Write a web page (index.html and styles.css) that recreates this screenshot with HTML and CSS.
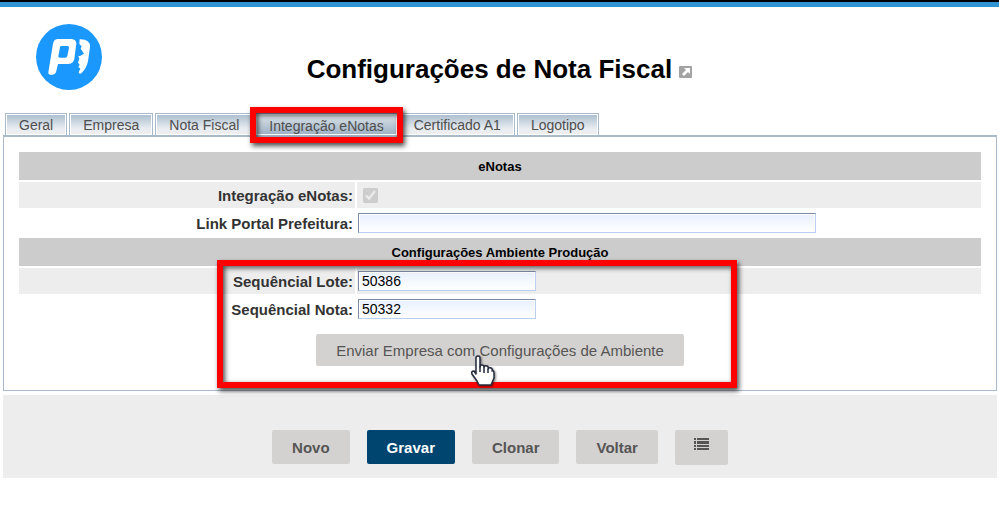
FILE: index.html
```html
<!DOCTYPE html>
<html lang="pt-BR">
<head>
  <meta charset="UTF-8" />
  <meta name="viewport" content="width=device-width, initial-scale=1.0"/>
  <title>Configurações de Nota Fiscal</title>
  <link rel="stylesheet" href="styles.css">
</head>
<body>
  <div class="topbar"></div>

  <header class="header">
    <svg class="logo" viewBox="0 0 198 198" aria-hidden="true">
      <circle cx="99" cy="99" r="99" fill="#1b98fd"/>
      <path fill="#fff" fill-rule="evenodd" d="M64 45H107Q120 46 121 58L115 105Q112 119 98 120H66L60 145Q57 152 50 152H41Q36 151 37 145L51 59Q54 46 64 45ZM75 66Q73 66 72 70L67 97Q67 101 71 101H88Q93 101 94 96L99 71Q99 66 95 66Z"/>
      <path fill="#fff" d="M131 46Q163 45 162 69L156 112Q152 132 137 147Q130 152 128 145L133 134L127 129L131 122L126 116L130 104L127 95Q133 98 136 94L144 89L134 74L137 67L130 60Z"/>
    </svg>
    <h1 class="title">Configurações de Nota Fiscal
      <svg class="title-icon" viewBox="0 0 13 12" aria-hidden="true">
        <rect width="13" height="12" rx="1" fill="#a3a3a3"/>
        <path d="M5 2h6v6L9 6 5 10 3 8l4-4z" fill="#fff"/>
      </svg>
    </h1>
  </header>

  <nav class="tabs">
    <a class="tab" href="#">Geral</a>
    <a class="tab" href="#">Empresa</a>
    <a class="tab" href="#">Nota Fiscal</a>
    <a class="tab active" href="#">Integração eNotas</a>
    <a class="tab" href="#">Certificado A1</a>
    <a class="tab" href="#">Logotipo</a>
  </nav>

  <form>
    <div class="panel">
      <table class="fields">
        <colgroup>
          <col class="col-name">
          <col>
        </colgroup>
        <tr class="group"><th colspan="2">eNotas</th></tr>
        <tr class="odd">
          <td class="name"><label for="integracao">Integração eNotas:</label></td>
          <td><input type="checkbox" id="integracao" class="check" checked disabled /></td>
        </tr>
        <tr>
          <td class="name"><label for="link">Link Portal Prefeitura:</label></td>
          <td><input type="text" id="link" class="field wide" /></td>
        </tr>
        <tr class="group"><th colspan="2">Configurações Ambiente Produção</th></tr>
        <tr class="odd">
          <td class="name"><label for="lote">Sequêncial Lote:</label></td>
          <td><input type="text" id="lote" class="field" value="50386" /></td>
        </tr>
        <tr>
          <td class="name"><label for="nota">Sequêncial Nota:</label></td>
          <td><input type="text" id="nota" class="field" value="50332" /></td>
        </tr>
      </table>

      <div class="send">
        <button type="button" class="btn btn-send">Enviar Empresa com Configurações de Ambiente</button>
      </div>

      <div class="ring">
        <svg class="hand" viewBox="0 0 26 34" aria-hidden="true">
          <path d="M6 4Q6 2 8 2T10 4V13Q10 11 12 11T14 13Q15 11 17 12T18 15Q19 13 21 14T22 17Q24 16 24 19V24L21 31H9L7 27L2 20Q1 17 4 17L6 20Z" fill="#fff" stroke="#252b3d" stroke-width="1.5" stroke-linejoin="round"/>
          <path d="M10 12V18M14 13V19M18 15V19" fill="none" stroke="#252b3d" stroke-width="1.5"/>
        </svg>
      </div>
    </div>

    <div class="actions">
      <button type="button" class="btn">Novo</button>
      <button type="button" class="btn btn-primary">Gravar</button>
      <button type="button" class="btn">Clonar</button>
      <button type="button" class="btn">Voltar</button>
      <button type="button" class="btn btn-list" aria-label="Listar">
        <svg class="list-icon" viewBox="0 0 15 13" aria-hidden="true">
          <path d="M0 0h2v2H0zM3 0h12v2H3zM0 3h2v3H0zM3 3h12v3H3zM0 7h2v2H0zM3 7h12v2H3zM0 10h2v2H0zM3 10h12v2H3z" fill="#555"/>
        </svg>
      </button>
    </div>
  </form>
</body>
</html>
```
FILE: styles.css
```css
body {
  margin: 0;
  background: #fff;
  font-family: "Liberation Sans", Arial, sans-serif;
}
.topbar {
  height: 5px;
  border-top: 2px solid #000;
  background: #2f94d1;
}
.header {
  display: grid;
  grid-template-columns: 66px 1fr 66px;
  padding: 17px 36px 23px;
}
.logo {
  width: 66px;
  height: 66px;
}
.title {
  margin: 0;
  padding-top: 28px;
  font-size: 26px;
  line-height: 34px;
  text-align: center;
  color: #000;
}
.title-icon {
  width: 13px;
  height: 12px;
}

/* tabs */
.tabs {
  display: flex;
  gap: 2px;
  padding: 0 5px;
}
.tab {
  position: relative;
  box-sizing: border-box;
  height: 22px;
  padding: 0 13px;
  border: 1px solid #a9bacb;
  border-bottom: none;
  box-shadow: inset 0 0 0 1px #fff;
  background: linear-gradient(#a9bccd, #e9edf1 70%, #eee);
  font-size: 14px;
  line-height: 23px;
  color: #4e4e4e;
  text-decoration: none;
}
.tab.active {
  background: linear-gradient(#dde4ea, #9db1c4);
  line-height: 25px;
}
.tab.active::after {
  content: "";
  position: absolute;
  z-index: 2;
  inset: -7px -6px -8px;
  border: 6px solid #f00;
  box-shadow: 2px 3px 5px rgba(0,0,0,0.7), inset 2px 2px 5px rgba(0,0,0,0.7);
}

/* form */
.panel {
  position: relative;
  margin: 0 2px 0 3px;
  padding: 13px 13px 24px;
  border: 1px solid #a9bacb;
  border-top-width: 2px;
}
.fields {
  width: 100%;
  border-spacing: 2px;
  table-layout: fixed;
}
.col-name {
  width: 35%;
}
.fields td, .fields th {
  height: 26px;
  padding: 0 1px;
}
.fields .group th {
  height: 28px;
  padding: 0;
  background: #ccc;
  font-size: 13px;
  color: #000;
}
.odd td {
  background: #ededed;
}
.fields .name {
  padding-right: 2px;
  text-align: right;
  font-size: 15px;
  font-weight: bold;
  color: #333;
}
.check {
  display: block;
  width: 15px;
  height: 15px;
  margin: 0 5px;
}
.field {
  display: block;
  box-sizing: border-box;
  width: 178px;
  height: 20px;
  padding: 0 3px;
  border: 1px solid #b9cff0;
  border-top-color: #7b8ba6;
  border-left-color: #7b8ba6;
  background: linear-gradient(#e8f0fd, #fff);
  font-family: inherit;
  font-size: 14px;
  color: #000;
  box-shadow: inset 0 0 0 1px #fff;
}
.wide {
  width: 458px;
}
.send {
  margin-top: 10px;
  text-align: center;
}
.ring {
  position: absolute;
  top: 123px;
  left: calc(50% - 283px);
  box-sizing: border-box;
  width: 520px;
  height: 128px;
  border: 6px solid #f00;
  box-shadow: 2px 3px 5px rgba(0,0,0,0.7), inset 2px 2px 5px rgba(0,0,0,0.7);
  pointer-events: none;
}
.hand {
  position: absolute;
  top: 88px;
  left: 247px;
  width: 26px;
  height: 34px;
  filter: drop-shadow(1px 1px 1px rgba(0,0,0,0.5));
}

/* buttons */
.btn {
  height: 34px;
  padding: 0 20px;
  border: none;
  border-radius: 2px;
  background: #d4d2d0;
  font-family: inherit;
  font-size: 15px;
  font-weight: bold;
  color: #555;
  cursor: pointer;
}
.btn-send {
  height: 32px;
  font-weight: normal;
  vertical-align: top;
}
.btn-primary {
  background: #00456f;
  color: #fff;
}
.btn-list {
  height: 35px;
  padding: 0 19px 4px;
}
.list-icon {
  width: 15px;
  height: 13px;
}
.actions {
  display: flex;
  justify-content: center;
  gap: 17px;
  margin: 4px 2px 0 3px;
  padding: 35px 0 13px;
  background: #ededed;
}
```
